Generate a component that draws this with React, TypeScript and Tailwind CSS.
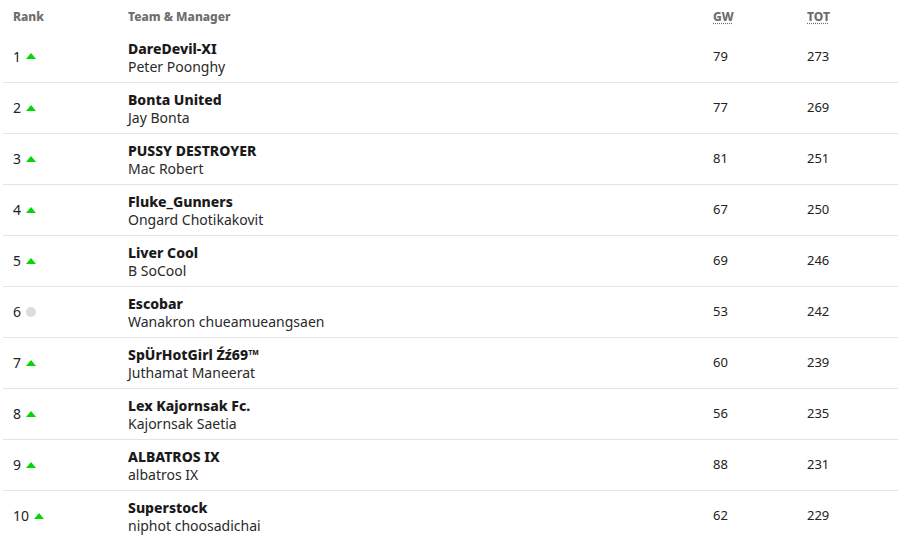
const rows = [
  { rank: 1, team: 'DareDevil-XI', manager: 'Peter Poonghy', gw: 79, tot: 273, move: 'up' },
  { rank: 2, team: 'Bonta United', manager: 'Jay Bonta', gw: 77, tot: 269, move: 'up' },
  { rank: 3, team: 'PUSSY DESTROYER', manager: 'Mac Robert', gw: 81, tot: 251, move: 'up' },
  { rank: 4, team: 'Fluke_Gunners', manager: 'Ongard Chotikakovit', gw: 67, tot: 250, move: 'up' },
  { rank: 5, team: 'Liver Cool', manager: 'B SoCool', gw: 69, tot: 246, move: 'up' },
  { rank: 6, team: 'Escobar', manager: 'Wanakron chueamueangsaen', gw: 53, tot: 242, move: 'same' },
  { rank: 7, team: 'SpÜrHotGirl Źź69™', manager: 'Juthamat Maneerat', gw: 60, tot: 239, move: 'up' },
  { rank: 8, team: 'Lex Kajornsak Fc.', manager: 'Kajornsak Saetia', gw: 56, tot: 235, move: 'up' },
  { rank: 9, team: 'ALBATROS IX', manager: 'albatros IX', gw: 88, tot: 231, move: 'up' },
  { rank: 10, team: 'Superstock', manager: 'niphot choosadichai', gw: 62, tot: 229, move: 'up' },
];

function Movement({ move }: { move: string }) {
  if (move === 'same') {
    return <span className="ml-[5px] inline-block h-[10px] w-[10px] rounded-full bg-[#dcdcdc]" aria-hidden="true" />;
  }
  return (
    <svg className="ml-[5px]" width="10" height="6" viewBox="0 0 10 6" aria-hidden="true">
      <path d="M5 0 L10 6 L0 6 Z" fill="#05d405" />
    </svg>
  );
}

export default function App() {
  return (
    <div className="min-h-screen bg-white pl-[3px] pr-[9px] font-['Noto_Sans',sans-serif] text-[#222]">
      <table className="w-full border-collapse">
        <thead>
          <tr className="h-[31px] text-left text-[12px] text-[#6e6e6e]">
            <th className="w-[115px] pl-[10px] pt-[3px] font-extrabold">Rank</th>
            <th className="pl-[10px] pt-[3px] font-extrabold">Team &amp; Manager</th>
            <th className="w-[94px] pl-[10px] pt-[3px] font-extrabold">
              <abbr title="Gameweek" className="underline decoration-dotted underline-offset-2">GW</abbr>
            </th>
            <th className="w-[101px] pl-[10px] pt-[3px] font-extrabold">
              <abbr title="Total" className="underline decoration-dotted underline-offset-2">TOT</abbr>
            </th>
          </tr>
        </thead>
        <tbody>
          {rows.map((r) => (
            <tr key={r.rank} className="h-[51px] border-b border-[#e4e4e4] text-[14px] last:border-b-0">
              <td className="pl-[10px]">
                <span className="flex items-center">
                  {r.rank}
                  <Movement move={r.move} />
                </span>
              </td>
              <td className="pl-[10px] pt-[3px] leading-[18px]">
                <div className="font-extrabold text-[#1a1a1a]">{r.team}</div>
                <div className="text-[#2a2a2a]">{r.manager}</div>
              </td>
              <td className="pl-[10px] text-[13px]">{r.gw}</td>
              <td className="pl-[10px] text-[13px]">{r.tot}</td>
            </tr>
          ))}
        </tbody>
      </table>
    </div>
  );
}
